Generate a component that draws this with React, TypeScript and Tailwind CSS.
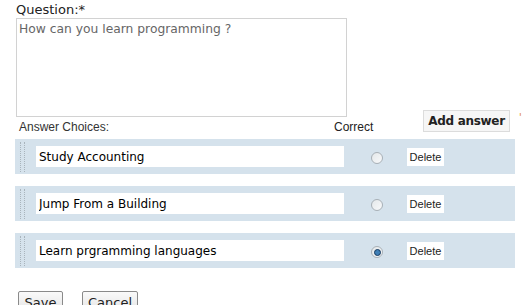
const answers = [
  { id: 1, text: "Study Accounting", correct: false },
  { id: 2, text: "Jump From a Building", correct: false },
  { id: 3, text: "Learn prgramming languages", correct: true },
];

function Grip() {
  return (
    <div className="flex h-[30px] w-[6px] gap-[2px]">
      <div className="h-full w-[2px] border-l border-dotted border-[#a9b4bc]" />
      <div className="h-full w-[2px] border-l border-dotted border-[#a9b4bc]" />
    </div>
  );
}

function Radio({ checked }: { checked: boolean }) {
  return (
    <div className="flex h-[12px] w-[12px] items-center justify-center rounded-full border border-[#a8b0b6] bg-gradient-to-br from-[#e4e8ea] to-[#f8f9fa]">
      {checked && <div className="h-[7px] w-[7px] rounded-full border border-[#173a5e] bg-[#3f7fb6]" />}
    </div>
  );
}

export default function App() {
  return (
    <div className="relative h-[305px] w-[523px] overflow-hidden bg-white font-['DejaVu_Sans',sans-serif]">
      <p className="pl-[16px] pt-[1px] text-[13px] leading-[17px] text-[#222]">Question:*</p>
      <textarea
        className="ml-[16px] block h-[99px] w-[331px] resize-none border border-[#d2d2d2] px-[2px] pt-[2px] text-[12.3px] leading-[16px] text-[#666] outline-none"
        defaultValue="How can you learn programming ?"
      />

      <div className="mt-[-7px] flex h-[29px] items-start">
        <span className="ml-[19px] mt-[10px] w-[315px] font-['Liberation_Sans',sans-serif] text-[12px] leading-[14px] text-[#333]">
          Answer Choices:
        </span>
        <span className="mt-[10px] w-[89px] font-['Liberation_Sans',sans-serif] text-[12px] leading-[14px] text-[#222]">
          Correct
        </span>
        <button className="h-[22px] w-[87px] whitespace-nowrap border border-[#dcdcdc] bg-[#f6f6f6] text-[12px] font-bold leading-[18px] tracking-[-0.3px] text-[#222]">
          Add answer
        </button>
        <span className="ml-[9px] mt-[3px] text-[10px] leading-[10px] text-[#e08a3c]">'</span>
      </div>

      <div className="ml-[15px] flex w-[500px] flex-col gap-[12px]">
        {answers.map((a) => (
          <div key={a.id} className="flex h-[35px] items-center bg-[#d5e2ec]">
            <div className="ml-[5px] w-[16px]">
              <Grip />
            </div>
            <input
              className="h-[21px] w-[308px] bg-white px-[3px] text-[12px] text-black outline-none"
              defaultValue={a.text}
            />
            <div className="ml-[27px] mt-[3px]">
              <Radio checked={a.correct} />
            </div>
            <button className="ml-[24px] h-[18px] w-[37px] bg-white font-['Liberation_Sans',sans-serif] text-[11px] leading-[18px] text-[#222]">
              Delete
            </button>
          </div>
        ))}
      </div>

      <div className="ml-[18px] mt-[23px] flex gap-[19px]">
        <button className="h-[24px] w-[45px] rounded-[2px] border border-[#8a8a8a] bg-gradient-to-b from-[#fafafa] to-[#e2e2e2] text-[13px] leading-[20px] text-[#222]">
          Save
        </button>
        <button className="h-[24px] w-[56px] rounded-[2px] border border-[#8a8a8a] bg-gradient-to-b from-[#fafafa] to-[#e2e2e2] text-[13px] leading-[20px] text-[#222]">
          Cancel
        </button>
      </div>
    </div>
  );
}
